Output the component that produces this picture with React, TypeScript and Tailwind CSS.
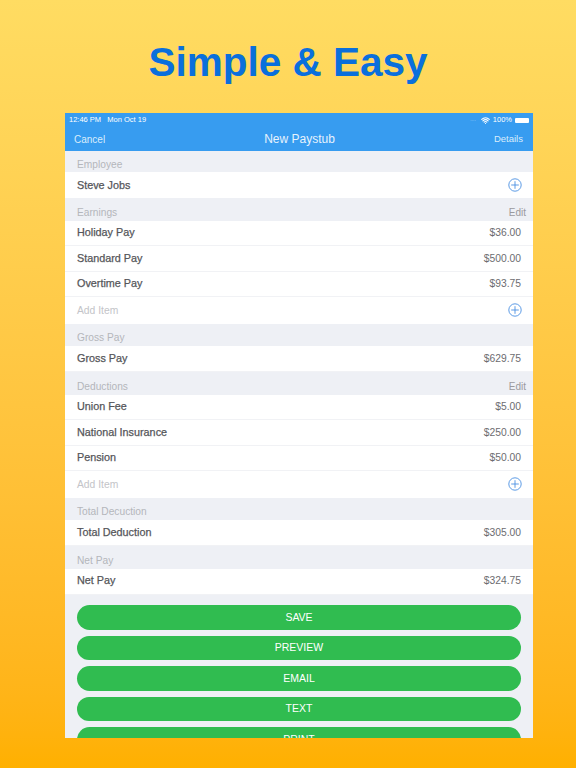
import { Wifi } from "lucide-react";

type RowData = { label: string; amount?: string; h: string };

const PlusIcon = () => (
  <svg width="14" height="14" viewBox="0 0 14 14" fill="none" stroke="#4a90e2" strokeWidth="0.9" className="mr-[-0.5px] mb-[1px]">
    <circle cx="7" cy="7" r="6.2" />
    <path d="M7 3.2v7.6M3.2 7h7.6" />
  </svg>
);

const SectionHeader = ({ title, edit, h }: { title: string; edit?: boolean; h: string }) => (
  <div className={`flex shrink-0 items-center justify-between bg-[#eef0f5] pl-3 pr-[7px] pt-[6px] text-[10.2px] text-[#b4b6bb] ${h}`}>
    <span>{title}</span>
    {edit && <span className="text-[10px] text-[#9a9a9e]">Edit</span>}
  </div>
);

const Row = ({ label, amount, h }: RowData) => (
  <div className={`flex shrink-0 items-center justify-between border-b border-[#f1f2f5] bg-white pl-3 pr-3 ${h}`}>
    <span className="mb-[1px] text-[10.8px] text-[#55565a] [-webkit-text-stroke:0.25px_#55565a]">{label}</span>
    <span className="text-[10.3px] text-[#6c6c70]">{amount}</span>
  </div>
);

const AddRow = ({ label, h }: { label: string; h: string }) => (
  <div className={`flex shrink-0 items-center justify-between bg-white pl-3 pr-3 ${h}`}>
    <span className={label === "Add Item" ? "text-[10.3px] text-[#c3c4c8]" : "text-[10.8px] text-[#55565a] [-webkit-text-stroke:0.25px_#55565a]"}>{label}</span>
    <PlusIcon />
  </div>
);

const GreenButton = ({ label }: { label: string }) => (
  <div className="flex h-[24.5px] shrink-0 items-center justify-center rounded-full bg-[#30bc50] pt-[1px] text-[10.5px] text-white">
    {label}
  </div>
);

export default function App() {
  return (
    <div className="flex h-[768px] w-[576px] flex-col items-center overflow-hidden bg-gradient-to-b from-[#ffdc62] to-[#ffb000] font-['Liberation_Sans',Arial,sans-serif]">
      <h1 className="mt-[37px] h-[76px] shrink-0 text-[40.5px] leading-[50px] font-bold text-[#0a6fdc]">Simple &amp; Easy</h1>

      <div className="ml-[22px] flex h-[625px] w-[468px] shrink-0 flex-col overflow-hidden bg-[#eef0f5]">
        {/* status + nav */}
        <div className="h-[38px] shrink-0 bg-[#379cf0] text-white">
          <div className="flex h-[14px] items-center justify-between pl-[4px] pr-[4px] text-[7.5px]">
            <span>12:46 PM&nbsp;&nbsp;&nbsp;Mon Oct 19</span>
            <div className="flex items-center gap-[3px]">
              <span className="mr-[2px] text-[5px] text-[#a9d3f7]">....</span>
              <Wifi size={9} strokeWidth={3} />
              <span>100%</span>
              <div className="h-[5px] w-[14px] rounded-[1px] bg-white" />
            </div>
          </div>
          <div className="flex h-[24px] items-center justify-between pr-[10px] pl-[9px] text-[10px] text-[#d9ecfc]">
            <span>Cancel</span>
            <span className="text-[12px] text-[#e6f2fd]">New Paystub</span>
            <span className="text-[9.5px]">Details</span>
          </div>
        </div>

        <SectionHeader title="Employee" h="h-[21px]" />
        <AddRow label="Steve Jobs" h="h-[26px]" />

        <SectionHeader title="Earnings" edit h="h-[22.5px]" />
        <Row label="Holiday Pay" amount="$36.00" h="h-[25.5px]" />
        <Row label="Standard Pay" amount="$500.00" h="h-[25.5px]" />
        <Row label="Overtime Pay" amount="$93.75" h="h-[25.5px]" />
        <AddRow label="Add Item" h="h-[26.5px]" />

        <SectionHeader title="Gross Pay" h="h-[22.5px]" />
        <Row label="Gross Pay" amount="$629.75" h="h-[26px]" />

        <SectionHeader title="Deductions" edit h="h-[22.5px]" />
        <Row label="Union Fee" amount="$5.00" h="h-[25.5px]" />
        <Row label="National Insurance" amount="$250.00" h="h-[25.5px]" />
        <Row label="Pension" amount="$50.00" h="h-[25.5px]" />
        <AddRow label="Add Item" h="h-[26.5px]" />

        <SectionHeader title="Total Decuction" h="h-[22.5px]" />
        <Row label="Total Deduction" amount="$305.00" h="h-[26px]" />

        <SectionHeader title="Net Pay" h="h-[22.5px]" />
        <Row label="Net Pay" amount="$324.75" h="h-[26px]" />

        <div className="flex flex-col gap-[6px] px-3 pt-[10.5px]">
          <GreenButton label="SAVE" />
          <GreenButton label="PREVIEW" />
          <GreenButton label="EMAIL" />
          <GreenButton label="TEXT" />
          <GreenButton label="PRINT" />
        </div>
      </div>
    </div>
  );
}
